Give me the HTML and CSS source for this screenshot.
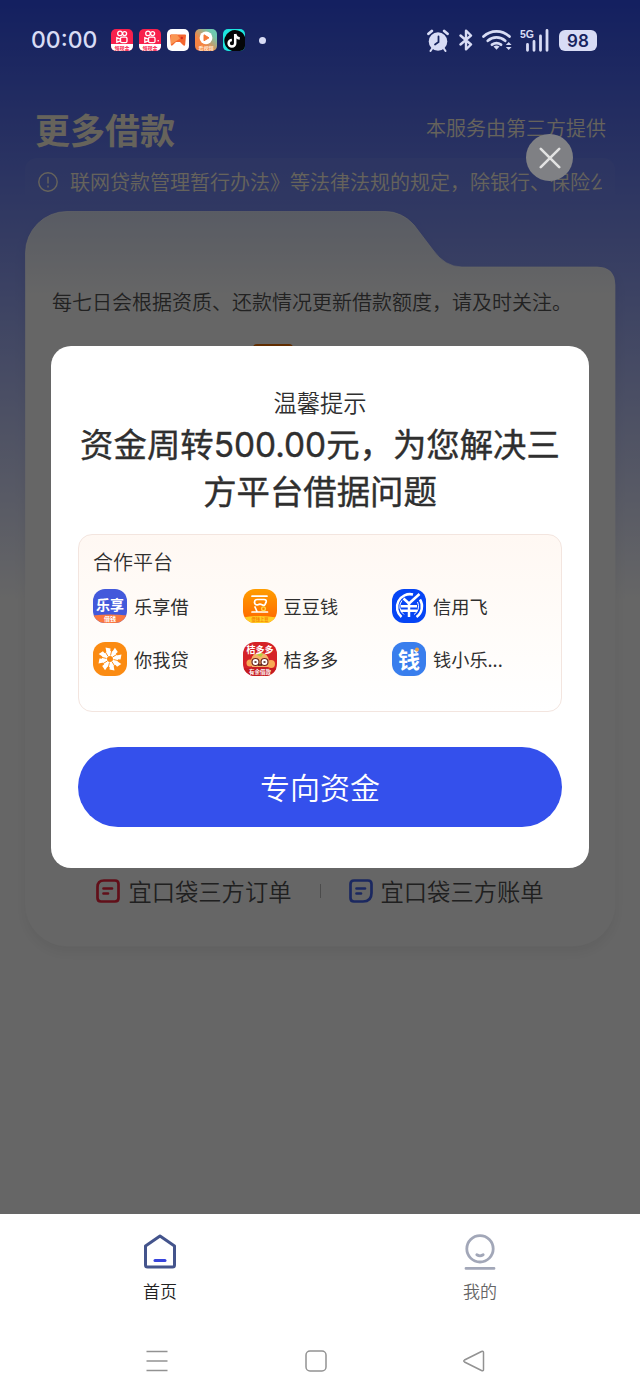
FILE: index.html
```
<!DOCTYPE html>
<html lang="zh-CN">
<head>
    <meta charset="UTF-8">
    <meta name="viewport" content="width=device-width, initial-scale=1.0">
    <title>更多借款</title>
    <link rel="stylesheet" href="styles.css">
</head>
<body>
<div class="page">
    <div class="status-bar">
        <span class="time">00:00</span>
        <div class="notifications">
            <svg class="app" viewBox="0 0 22 22">
                <rect width="22" height="22" rx="5" fill="#f8204c"/>
                <path d="M0 15h22v2a5 5 0 0 1-5 5H5a5 5 0 0 1-5-5z" fill="#fff"/>
                <g fill="none" stroke="#fff" stroke-width="1.3"><circle cx="9" cy="4.4" r="2.3"/><circle cx="13.6" cy="4.6" r="2"/><rect x="9.500" y="8.200" width="6.500" height="5.400" rx="1.400"/><path d="M9.500 10.200 5.800 8.800v4.400l3.700-1.400"/></g>
                <text x="11" y="20.600" class="app-tag" fill="#f8204c">领现金</text>
            </svg>
            <svg class="app" viewBox="0 0 22 22">
                <rect width="22" height="22" rx="5" fill="#f8204c"/>
                <path d="M0 15h22v2a5 5 0 0 1-5 5H5a5 5 0 0 1-5-5z" fill="#fff"/>
                <g fill="none" stroke="#fff" stroke-width="1.3"><circle cx="9" cy="4.4" r="2.3"/><circle cx="13.6" cy="4.6" r="2"/><rect x="9.500" y="8.200" width="6.500" height="5.400" rx="1.400"/><path d="M9.500 10.200 5.800 8.800v4.400l3.700-1.400"/></g>
                <circle cx="19.200" cy="11.800" r=".8" fill="#fff"/>
                <text x="11" y="20.600" class="app-tag" fill="#f8204c">领现金</text>
            </svg>
            <svg class="app" viewBox="0 0 22 22">
                <rect width="22" height="22" rx="5" fill="#fff"/>
                <path d="M4 5.500h14q1 0 1 1l-.8 9q-.3 2-2 .8L13 13H9l-3.400 3.300q-1.600 1-1.800-.8L3 6.500q0-1 1-1z" fill="#f4662f"/>
                <path d="M4 5.500h6l3 4-9 6z" fill="#fa9653"/><circle cx="14.800" cy="9" r="1.200" fill="#d92a20"/>
            </svg>
            <svg class="app" viewBox="0 0 22 22">
                <defs><linearGradient id="video" x1="0" y1="1" x2="1" y2="0"><stop offset=".35" stop-color="#f58444"/><stop offset=".8" stop-color="#6fc8b0"/></linearGradient></defs>
                <rect width="22" height="22" rx="5" fill="url(#video)"/>
                <circle cx="11" cy="8.800" r="6.400" fill="#fff"/><path d="M9 5.800v6l5-3z" fill="#f57838" stroke="#f57838" stroke-linejoin="round"/>
                <text x="11" y="20.500" class="app-tag" fill="#ffe6cf">看视频</text>
            </svg>
            <svg class="app" viewBox="0 0 22 22">
                <rect width="22" height="22" rx="5" fill="#1de5df"/>
                <path d="M15 1.500A10 10 0 0 1 22 8v9a5 5 0 0 1-5 5H9a10 10 0 1 1 6-20.500z" fill="#050608"/>
                <path d="M12.200 5v9.200a3.300 3.300 0 1 1-3.300-3.300M12.200 5q.8 4 4.600 4.400" fill="none" stroke="#fff" stroke-width="2.500"/>
            </svg>
        </div>
        <span class="dot"></span>
        <div class="system">
            <svg width="22" height="23" viewBox="0 0 22 23">
                <circle cx="11" cy="12.500" r="9.300" fill="#d8dcf5"/>
                <path d="M1.500 4.800 4.800 2M20.500 4.800 17.200 2" stroke="#d8dcf5" stroke-width="2.800" stroke-linecap="round"/>
                <path d="m5.500 19-2 3M16.500 19l2 3" stroke="#d8dcf5" stroke-width="2" stroke-linecap="round"/>
                <path d="M11.500 7.500v5.500l-3.500 2.500" fill="none" stroke="#17245f" stroke-width="1.800" stroke-linecap="round"/>
            </svg>
            <svg class="bluetooth" width="14" height="22" viewBox="0 0 14 22">
                <path d="m1.500 6.500 10.500 9-5 4.800V1.700l5 4.800-10.500 9" fill="none" stroke="#d8dcf5" stroke-width="2.400" stroke-linejoin="round" stroke-linecap="round"/>
            </svg>
            <svg class="wifi" width="30" height="22" viewBox="0 0 30 22">
                <g fill="none" stroke="#d8dcf5" stroke-width="2.700" stroke-linecap="round"><path d="M1.500 7.500a19 19 0 0 1 26 0M5.800 11.800a13 13 0 0 1 17.400 0M10 15.700a7.500 7.500 0 0 1 9 0"/></g>
                <path d="m11.500 17.500 3 3.200 3-3.200q-3-2-6 0zM23.800 16l2.900-3 2.900 3zM23.800 18l2.900 3 2.900-3z" fill="#d8dcf5"/>
            </svg>
            <svg class="signal" width="29" height="23" viewBox="0 0 29 23">
                <text x="0" y="9.300" class="net">5G</text>
                <path d="M7.500 15.500v5.800M14 12.500v8.800M20.500 7v14.300M27 1.500v19.800" stroke="#d8dcf5" stroke-width="2.800" stroke-linecap="round"/>
            </svg>
            <span class="battery">98</span>
        </div>
    </div>

    <div class="content">
        <div class="header">
            <h1>更多借款</h1>
            <span>本服务由第三方提供</span>
        </div>
        <div class="notice">
            <svg width="20" height="20" viewBox="0 0 20 20" fill="none" stroke="#fff8e4" stroke-width="1.400"><circle cx="10" cy="10" r="9.200"/><path d="M10 4.800v6.800M10 13.600v1.800"/></svg>
            <p>联网贷款管理暂行办法》等法律法规的规定，除银行、保险公</p>
        </div>
        <div class="card">
            <svg class="card-shape" width="590" height="735" viewBox="0 0 590 735">
                <defs><linearGradient id="card" x1="0" y1="0" x2="0" y2="1"><stop offset="0" stop-color="#dde4f8"/><stop offset=".115" stop-color="#fff"/></linearGradient></defs>
                <path d="M.5 42A41.500 41.500 0 0 1 42 .5H360Q377 .5 389 14L408 39Q420 56 437 56H572Q590 56 590 74V693A42 42 0 0 1 548 735H42A42 42 0 0 1 .5 693z" fill="url(#card)" stroke="#fff" stroke-opacity=".65"/>
            </svg>
            <p class="tip">每七日会根据资质、还款情况更新借款额度，请及时关注。</p>
            <span class="badge"></span>
            <div class="links">
                <a><svg width="24" height="24" viewBox="0 0 24 24" fill="none" stroke="#f3263f" stroke-width="2.700" stroke-linecap="round"><path d="M8 1.500H19Q22.500 1.500 22.500 5V19Q22.500 22.500 19 22.500H5Q1.500 22.500 1.500 19V8Q1.500 1.500 8 1.500zM7.500 9.500H16M7.500 14.500H12"/></svg>宜口袋三方订单</a>
                <i></i>
                <a><svg width="24" height="24" viewBox="0 0 24 24" fill="none" stroke="#4464f0" stroke-width="2.700" stroke-linecap="round"><path d="M5 1.500H19Q22.500 1.500 22.500 5V14Q22.500 22.500 14 22.500H5Q1.500 22.500 1.500 19V5Q1.500 1.500 5 1.500zM7.500 9.500H16M7.500 14.500H12"/></svg>宜口袋三方账单</a>
            </div>
        </div>
    </div>

    <div class="mask">
        <button class="close">
            <svg width="22" height="22" viewBox="0 0 22 22" stroke="#e2e2e2" stroke-width="2.600" stroke-linecap="round"><path d="m1.800 1.800 18.400 18.400M20.200 1.800 1.800 20.200"/></svg>
        </button>
        <div class="dialog">
            <p class="dialog-label">温馨提示</p>
            <h2>资金周转<span>500.00</span>元，为您解决三<br>方平台借据问题</h2>
            <div class="platforms">
                <h3>合作平台</h3>
                <ul>
                    <li>
                        <svg class="logo" viewBox="0 0 34 34">
                            <rect width="34" height="34" fill="#4359db"/>
                            <path d="M0 26.500q17-2 34 0v7.500H0z" fill="#fb7840"/>
                            <text x="17" y="20.500" font-size="14">乐享</text>
                            <text x="17" y="32" font-size="6">借钱</text>
                        </svg>乐享借
                    </li>
                    <li>
                        <svg class="logo" viewBox="0 0 34 34">
                            <defs><linearGradient id="bean" x1="0" y1="0" x2="0" y2="1"><stop offset="0" stop-color="#ff9d00"/><stop offset="1" stop-color="#ff6500"/></linearGradient></defs>
                            <rect width="34" height="34" fill="url(#bean)"/>
                            <path d="M0 28.500q17-3 34 0v5.500H0z" fill="#ffce26"/>
                            <path d="M9 7.200h15M14 10.500h7q3 0 2 3l-1 2q-1 1.500-3 .2-2-1-4 0-3 .8-3.500-2-.2-3 2.500-3.200zM12 18l2 4.500M9 23h15.500" fill="none" stroke="#fff" stroke-width="1.700" stroke-linecap="round"/>
                            <circle cx="20.500" cy="19.800" r="1.900" fill="none" stroke="#ffd84a" stroke-width="1.300"/>
                            <text x="17" y="32.300" font-size="4.200" class="orange">借钱上豆</text>
                        </svg>豆豆钱
                    </li>
                    <li>
                        <svg class="logo" viewBox="0 0 34 34">
                            <rect width="34" height="34" fill="#0645f5"/>
                            <g fill="none" stroke="#fff" stroke-width="2.500">
                                <path d="M9.500 28A13 13 0 0 1 21 5.500M28 10.500A13 13 0 0 1 24.500 28"/>
                                <path d="M12 25.500A9.500 9.500 0 0 1 10 11.500M25.500 13A9.500 9.500 0 0 1 22 25.500" stroke-width="1"/>
                                <path d="m11.500 9.500 5.500 5L27.500 5"/>
                                <path d="M9 17.200h16M9 21.700h16M17 14v14"/>
                            </g>
                        </svg>信用飞
                    </li>
                    <li>
                        <svg class="logo" viewBox="0 0 34 34">
                            <rect width="34" height="34" fill="#fb8b12"/>
                            <circle cx="17" cy="17" r="5.500" fill="none" stroke="#fff" stroke-width="5"/>
                            <g fill="#fff">
                                <path id="petal" d="M14 13 12.500 5.500 17.500 6.500 17 13z"/>
                                <use href="#petal" transform="rotate(45 17 17)"/>
                                <use href="#petal" transform="rotate(90 17 17)"/>
                                <use href="#petal" transform="rotate(135 17 17)"/>
                                <use href="#petal" transform="rotate(180 17 17)"/>
                                <use href="#petal" transform="rotate(225 17 17)"/>
                                <use href="#petal" transform="rotate(270 17 17)"/>
                                <use href="#petal" transform="rotate(315 17 17)"/>
                            </g>
                            <g stroke="#fb8b12" stroke-width=".9">
                                <path id="slit" d="M17.500 13.500 19 7.500"/>
                                <use href="#slit" transform="rotate(45 17 17)"/>
                                <use href="#slit" transform="rotate(90 17 17)"/>
                                <use href="#slit" transform="rotate(135 17 17)"/>
                                <use href="#slit" transform="rotate(180 17 17)"/>
                                <use href="#slit" transform="rotate(225 17 17)"/>
                                <use href="#slit" transform="rotate(270 17 17)"/>
                                <use href="#slit" transform="rotate(315 17 17)"/>
                            </g>
                        </svg>你我贷
                    </li>
                    <li>
                        <svg class="logo" viewBox="0 0 34 34">
                            <rect width="34" height="34" fill="#d52227"/>
                            <circle cx="7" cy="21" r="3.500" fill="#f8aa55"/><circle cx="28" cy="22" r="4" fill="#f8aa55"/>
                            <path d="M8 20q0-9 9-9t9 9l-1 5H9z" fill="#f6b269"/>
                            <path d="M14 13q2-3 6-1l-2 3z" fill="#b2cf3d"/>
                            <g fill="#fff" stroke="#70251d" stroke-width="1.200"><circle cx="12.500" cy="20" r="3.500"/><circle cx="21.500" cy="20" r="3.500"/></g>
                            <path d="M11.500 20h2M20.500 20h2M15 23h4" stroke="#471815" stroke-width="1.500"/>
                            <path d="M0 26.500q17-2 34 0v7.500H0z" fill="#c51b20"/>
                            <text x="17" y="10.500" font-size="9">桔多多</text>
                            <text x="17" y="32" font-size="5.500">有余借款</text>
                        </svg>桔多多
                    </li>
                    <li>
                        <svg class="logo" viewBox="0 0 34 34">
                            <rect width="34" height="34" fill="#397eed"/>
                            <text x="17" y="25.500" font-size="22">钱</text>
                            <circle cx="25" cy="7.500" r="2" fill="#eaa34b"/>
                        </svg>钱小乐...
                    </li>
                </ul>
            </div>
            <button class="submit">专向资金</button>
        </div>
    </div>

    <div class="tabbar">
        <a class="active">
            <svg width="34" height="38" viewBox="0 0 34 38" fill="none" stroke-linejoin="round" stroke-linecap="round"><path d="M17 4 31.500 14V33Q31.500 35 29.500 35H4.500Q2.500 35 2.500 33V14z" stroke="#44548c" stroke-width="3"/><path d="M12 28.500h10" stroke="#3844dc" stroke-width="3"/></svg>
            首页
        </a>
        <a>
            <svg width="34" height="38" viewBox="0 0 34 38" fill="none" stroke="#a2a7b8" stroke-width="2.800" stroke-linecap="round"><circle cx="17" cy="16.800" r="13.200"/><path d="M13.800 22.800q3.200 2 6.400 0M3 36.400h28"/></svg>
            我的
        </a>
    </div>
    <div class="sysnav">
        <svg width="24" height="24" viewBox="0 0 24 24"><path d="M1.500 2.500h21M1.500 12h21M1.500 21.500h21"/></svg>
        <svg width="24" height="24" viewBox="0 0 24 24"><rect x="2" y="2" width="20" height="20" rx="4"/></svg>
        <svg width="24" height="24" viewBox="0 0 24 24"><path d="M19.500 2.500 2.500 11q-1.500 1 0 2l17 8.500q2 .8 2-1V3.500q0-1.800-2-1z"/></svg>
    </div>
</div>
</body>
</html>
```

FILE: styles.css
```
* {
    box-sizing: border-box;
}
body {
    margin: 0;
    font-family: "Noto Sans CJK SC", sans-serif;
    font-weight: 350;
    color: #2f2f2f;
}
h1, h2, h3, p, ul {
    margin: 0;
    padding: 0;
}
svg {
    display: block;
    flex-shrink: 0;
}
button {
    border: none;
    padding: 0;
    font-family: inherit;
    font-weight: inherit;
}
.page {
    position: relative;
    width: 640px;
    height: 1400px;
    display: flex;
    flex-direction: column;
    overflow: hidden;
    background: linear-gradient(#3250f0, #ffffff 600px);
}
/* status bar stays above the mask */
.status-bar {
    position: relative;
    z-index: 2;
    height: 80px;
    padding: 0 43px 0 31px;
    display: flex;
    align-items: center;
    color: #d8dcf5;
}
.time {
    width: 80px;
    font-family: Inter, sans-serif;
    font-size: 23px;
    font-weight: 500;
}
.notifications {
    display: flex;
    gap: 6px;
}
.app {
    width: 22px;
    height: 22px;
}
.app-tag {
    font-size: 5px;
    font-weight: bold;
    text-anchor: middle;
}
.dot {
    width: 7px;
    height: 7px;
    margin-left: 14px;
    border-radius: 50%;
    background-color: #d8dcf5;
}
.system {
    margin-left: auto;
    display: flex;
    align-items: center;
}
.bluetooth {
    margin-left: 10px;
}
.wifi {
    margin-left: 9px;
}
.signal {
    margin-left: 8px;
}
.net {
    font-family: "Liberation Sans", sans-serif;
    font-size: 10.5px;
    font-weight: 700;
    fill: #d8dcf5;
}
.battery {
    width: 38px;
    height: 21px;
    margin-left: 10px;
    border-radius: 6px;
    background-color: #d8dcf5;
    color: #17245f;
    font-family: Inter, sans-serif;
    font-size: 17px;
    font-weight: 600;
    line-height: 22px;
    text-align: center;
}
.content {
    height: 1134px;
    padding: 0 25px;
}
.header {
    height: 76px;
    padding: 25px 9px 0 10px;
    display: flex;
    justify-content: space-between;
    color: #fff8e4;
}
.header h1 {
    font-size: 35px;
    font-weight: bold;
    line-height: 48px;
}
.header span {
    font-size: 20px;
    line-height: 46px;
}
.notice {
    height: 47px;
    margin-top: 2px;
    margin-bottom: 6px;
    padding: 0 13px;
    display: flex;
    align-items: center;
    gap: 12px;
    border-radius: 12px;
    background: linear-gradient(rgba(255, 255, 255, 0.05), transparent);
    color: #fff8e4;
}
.notice p {
    flex: 1;
    overflow: hidden;
    font-size: 20px;
    white-space: nowrap;
}
.card {
    position: relative;
    height: 735px;
    padding: 77px 27px 0;
    display: flex;
    flex-direction: column;
}
.card-shape {
    position: absolute;
    top: 0;
    left: 0;
    overflow: visible;
    filter: drop-shadow(0 6px 6px rgba(0, 0, 0, 0.06));
}
.tip {
    position: relative;
    font-size: 20px;
    line-height: 28px;
    color: #555555;
}
.badge {
    position: relative;
    width: 40px;
    height: 30px;
    margin: 28px 0 0 201px;
    border-radius: 4px;
    background-color: #f27000;
}
.links {
    position: relative;
    margin-top: auto;
    margin-bottom: 38px;
    display: flex;
    justify-content: center;
    align-items: center;
    font-size: 23.3px;
    color: #505050;
}
.links a {
    display: flex;
    align-items: center;
    gap: 8px;
}
.links i {
    width: 1px;
    height: 14px;
    margin: 0 28px;
    background-color: #bbbbbb;
}
.mask {
    position: absolute;
    top: 0;
    left: 0;
    width: 640px;
    height: 1214px;
    padding: 134px 51px 0;
    display: flex;
    flex-direction: column;
    background-color: rgba(0, 0, 0, 0.6);
}
.close {
    width: 47px;
    height: 47px;
    margin-right: 16px;
    align-self: flex-end;
    display: flex;
    justify-content: center;
    align-items: center;
    border-radius: 50%;
    background-color: #7f8084;
}
.dialog {
    height: 522px;
    margin-top: 165px;
    padding: 39px 27px 0;
    border-radius: 20px;
    background-color: #ffffff;
}
.dialog-label {
    font-size: 23.3px;
    line-height: 34px;
    text-align: center;
}
.dialog h2 {
    height: 94px;
    font-size: 33.4px;
    font-weight: 400;
    line-height: 47px;
    text-align: center;
    white-space: nowrap;
    -webkit-text-stroke: 0.4px #2f2f2f;
}
.dialog h2 span {
    font-family: Inter, sans-serif;
    line-height: 1;
}
.platforms {
    height: 178px;
    margin-top: 21px;
    padding: 13px 14px;
    border: 1px solid #f3e5df;
    border-radius: 14px;
    background: linear-gradient(#fff8f3, #fffdfb 70%, #ffffff);
}
.platforms h3 {
    font-size: 20px;
    font-weight: inherit;
    line-height: 28px;
}
.platforms ul {
    margin-top: 13px;
    display: grid;
    grid-template-columns: repeat(3, 149.5px);
    row-gap: 19px;
    list-style: none;
}
.platforms li {
    height: 34px;
    display: flex;
    align-items: center;
    gap: 7px;
    font-size: 18.2px;
    font-weight: 400;
    line-height: 32px;
}
.logo {
    width: 34px;
    height: 34px;
    border-radius: 12px;
}
.logo text {
    fill: #ffffff;
    font-weight: bold;
    text-anchor: middle;
}
.logo .orange {
    fill: #f78300;
}
.submit {
    width: 484px;
    height: 80px;
    margin-top: 35px;
    padding-bottom: 2px;
    border-radius: 40px;
    background-color: #3450ec;
    color: #ffffff;
    font-size: 30px;
}
.tabbar {
    height: 112px;
    padding-top: 18px;
    display: flex;
    background-color: #ffffff;
}
.tabbar a {
    flex: 1;
    display: flex;
    flex-direction: column;
    align-items: center;
    gap: 8px;
    font-size: 17px;
    line-height: 26px;
    color: #666666;
}
.tabbar .active {
    color: #222222;
}
.sysnav {
    height: 74px;
    padding: 23px 154px 0 145px;
    display: flex;
    justify-content: space-between;
    background-color: #ffffff;
}
.sysnav svg {
    fill: none;
    stroke: #929292;
    stroke-width: 1.5;
}
```
